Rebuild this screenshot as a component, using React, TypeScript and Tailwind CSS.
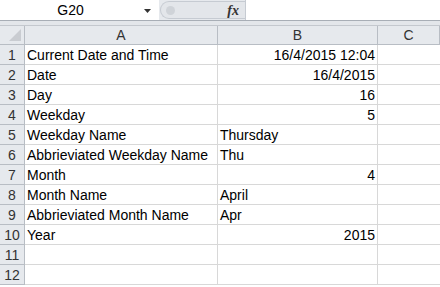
import React from "react";

const rows: [string, string, boolean][] = [
  ["Current Date and Time", "16/4/2015 12:04", true],
  ["Date", "16/4/2015", true],
  ["Day", "16", true],
  ["Weekday", "5", true],
  ["Weekday Name", "Thursday", false],
  ["Abbrieviated Weekday Name", "Thu", false],
  ["Month", "4", true],
  ["Month Name", "April", false],
  ["Abbrieviated Month Name", "Apr", false],
  ["Year", "2015", true],
  ["", "", false],
  ["", "", false],
];

export default function App() {
  return (
    <div className="w-[440px] h-[287px] overflow-hidden bg-white text-[14px] text-black" style={{ fontFamily: '"Liberation Sans", Arial, sans-serif' }}>
      {/* formula bar */}
      <div className="flex h-[21px] border-b border-[#a8aeb6] bg-[#e6e9ed]">
        <div className="relative flex w-[159px] items-center justify-center bg-white pr-[10px] pt-[1px]">
          <span className="ml-[-8px]">G20</span>
          <svg className="absolute right-[8px] top-[9px]" width="7" height="4" viewBox="0 0 7 4"><path d="M0 0h7L3.5 4z" fill="#333" /></svg>
        </div>
        <div className="flex flex-1 items-stretch">
          <div className="relative mt-[1px] mb-[1px] ml-[1px] flex w-[85px] items-center justify-end rounded-l-[10px] border border-r-0 border-[#c6cbd2] bg-[#e3e6ea] pr-[4px]">
            <div className="absolute left-[5px] top-[4px] h-[9px] w-[9px] rounded-full bg-[#cfd3d8]" />
            <span className="italic font-bold text-[14px] text-[#333] mr-[2px]" style={{ fontFamily: '"Liberation Serif", serif' }}>fx</span>
          </div>
          <div className="flex-1 border-l border-[#c6cbd2] bg-white" />
        </div>
      </div>
      <div className="h-[4px] bg-[#e3e6ea]" />
      {/* grid */}
      <div className="grid grid-cols-[25px_193px_160px_62px] border-t border-[#c4c8ce]">
        <div className="relative h-[19px] border-r border-b border-[#b8bdc4] bg-[#e6e9ed]">
          <svg className="absolute right-[3px] bottom-[3px]" width="12" height="12" viewBox="0 0 12 12"><path d="M12 0V12H0z" fill="#c9ccd1" /></svg>
        </div>
        {["A", "B", "C"].map((c) => (
          <div key={c} className="flex h-[19px] items-center justify-center border-r border-b border-[#b8bdc4] bg-[#e6e9ed] pt-[1px] text-[#333]">{c}</div>
        ))}
        {rows.map(([a, b, right], i) => (
          <React.Fragment key={i}>
            <div className="flex h-[20px] items-center justify-center border-r border-b border-[#b8bdc4] bg-[#e6e9ed] pt-[2px] text-[#333]">{i + 1}</div>
            <div className="flex h-[20px] items-center border-r border-b border-[#d8d8d8] pl-[2px] pt-[2px] whitespace-nowrap">{a}</div>
            <div className={`flex h-[20px] items-center border-r border-b border-[#d8d8d8] px-[2px] pt-[2px] whitespace-nowrap ${right ? "justify-end" : "justify-start"}`}>{b}</div>
            <div className="h-[20px] border-b border-[#d8d8d8]" />
          </React.Fragment>
        ))}
      </div>
    </div>
  );
}
